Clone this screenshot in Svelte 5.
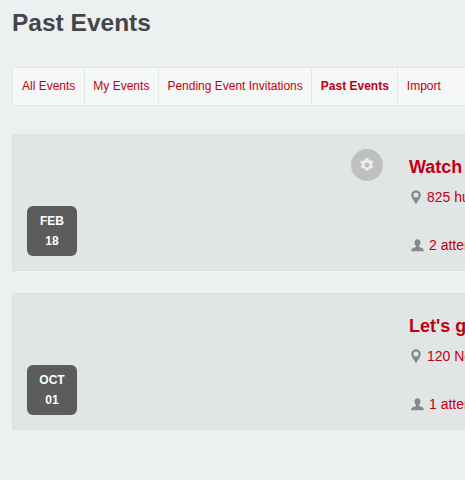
<script>
  const events = [
    { month: 'FEB', day: '18', title: 'Watch the game together', place: '825 hudson street, New York', count: '2 attending', gear: true },
    { month: 'OCT', day: '01', title: "Let's go to the park today", place: '120 North Avenue, New York', count: '1 attending', gear: false }
  ];
  const tabs = ['All Events', 'My Events', 'Pending Event Invitations', 'Past Events', 'Import'];
</script>

<div class="page">
  <h1>Past Events</h1>
  <nav class="tabs">
    {#each tabs as tab}
      <a href="#top" class:active={tab === 'Past Events'}>{tab}</a>
    {/each}
  </nav>
  <div class="list">
    {#each events as ev}
      <article class="card">
        <div class="media">
          <div class="date"><span>{ev.month}</span><strong>{ev.day}</strong></div>
          {#if ev.gear}
            <div class="gear">
              <svg width="16" height="16" viewBox="0 0 16 16"><path fill="#eceeef" fill-rule="evenodd" d="M6.600 1h2.800l.4 1.900 1.200.7 1.900-.6 1.400 2.400-1.500 1.300v1.400l1.500 1.300-1.400 2.400-1.900-.6-1.200.7-.4 1.900H6.600l-.4-1.900-1.200-.7-1.900.6-1.400-2.400 1.500-1.300V7.300L1.200 6l1.400-2.400 1.900.6 1.200-.7zM8 5.500a2.500 2.500 0 1 0 0 5 2.500 2.500 0 0 0 0-5z"/></svg>
            </div>
          {/if}
        </div>
        <div class="info">
          <h2>{ev.title}</h2>
          <p class="place">
            <svg width="10" height="15" viewBox="0 0 10 15"><path fill="#84898c" fill-rule="evenodd" d="M5 .3A4.800 4.800 0 0 0 .2 5.100C.2 8.200 3.600 11.300 5 14.700 6.400 11.300 9.800 8.200 9.800 5.100A4.800 4.800 0 0 0 5 .3zm0 2.300a2.500 2.500 0 1 1 0 5 2.500 2.500 0 0 1 0-5z"/></svg>
            <span>{ev.place}</span>
          </p>
          <p class="count">
            <svg width="13" height="13" viewBox="0 0 13 13"><path fill="#84898c" d="M6.500.2c1.800 0 3 1.300 3 3.200 0 1.400-.6 2.600-1.400 3.200v1.300c1.500.6 3.900 1.200 4.400 2.300.2.500.3 1.400.3 2.100H.2c0-.7.100-1.600.3-2.100C1 9.100 3.400 8.500 4.900 7.900V6.600C4.100 6 3.500 4.800 3.500 3.400 3.500 1.500 4.700.2 6.500.2z"/></svg>
            <span>{ev.count}</span>
          </p>
        </div>
      </article>
    {/each}
  </div>
</div>

<style>
  :global(body) {
    overflow: hidden;
    background: #fff;
  }
  .page {
    box-sizing: border-box;
    width: 465px;
    height: 480px;
    padding: 8px 0 0 12px;
    overflow: hidden;
    background: #edf0f1;
    font-family: "Liberation Sans", Arial, sans-serif;
  }
  h1 {
    margin: 0;
    font-size: 24.5px;
    line-height: 29px;
    font-weight: 700;
    color: #444547;
  }
  .tabs {
    display: flex;
    box-sizing: border-box;
    width: 480px;
    height: 39px;
    margin-top: 30px;
    background: #f6f7f7;
    border: 1px solid #e5e8e9;
  }
  .tabs a {
    display: block;
    padding: 0 8.5px;
    border-right: 1px solid #e5e8e9;
    font-size: 12px;
    line-height: 37px;
    color: #c00010;
    text-decoration: none;
    white-space: nowrap;
  }
  .tabs a:first-child {
    padding-left: 9px;
  }
  .tabs a:last-child {
    border-right: 0;
  }
  .tabs a.active {
    font-weight: 700;
  }
  .list {
    display: flex;
    flex-direction: column;
    gap: 22px;
    margin-top: 28px;
  }
  .card {
    display: flex;
    box-sizing: border-box;
    width: 480px;
    height: 137px;
    background: #e2e5e6;
    border: 1px solid #dde0e1;
    overflow: hidden;
  }
  .media {
    display: flex;
    justify-content: space-between;
    box-sizing: border-box;
    flex: none;
    width: 370px;
    padding: 14px 0 14px 14px;
  }
  .date {
    display: flex;
    flex-direction: column;
    align-items: center;
    align-self: flex-end;
    box-sizing: border-box;
    width: 50px;
    height: 50px;
    padding-top: 5px;
    border-radius: 6px;
    background: #5c5c5c;
    color: #fff;
    font-size: 12px;
    line-height: 20px;
  }
  .date span,
  .date strong {
    font-weight: 700;
  }
  .gear {
    display: flex;
    align-items: center;
    justify-content: center;
    width: 32px;
    height: 32px;
    border-radius: 50%;
    background: #bdbfc0;
  }
  .info {
    flex: none;
    width: 400px;
    padding: 21px 0 0 26px;
    box-sizing: border-box;
  }
  h2 {
    margin: 0;
    font-size: 18px;
    line-height: 22px;
    font-weight: 700;
    color: #c00010;
    white-space: nowrap;
  }
  p {
    display: flex;
    align-items: center;
    margin: 0;
    font-size: 14px;
    line-height: 20px;
    color: #c00010;
    white-space: nowrap;
  }
  .place {
    gap: 6px;
    margin-top: 9px;
    margin-left: 2px;
  }
  .count {
    gap: 5px;
    margin-top: 28px;
    margin-left: 2px;
  }
</style>
